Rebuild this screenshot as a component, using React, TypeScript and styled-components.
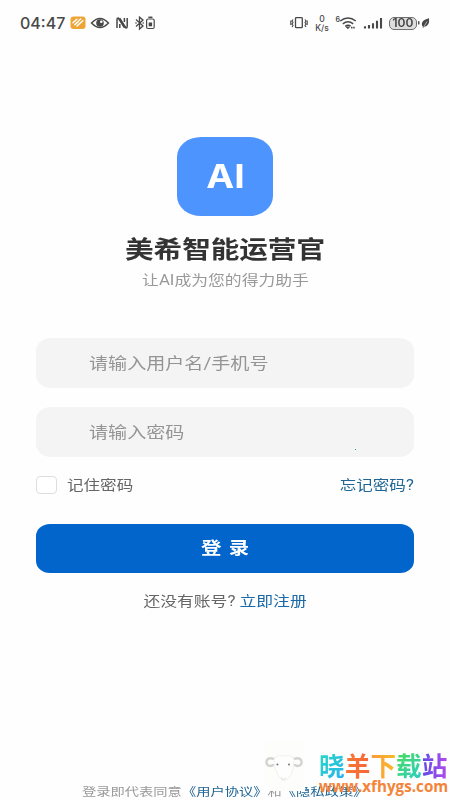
import React from 'react';
import styled, { createGlobalStyle } from 'styled-components';

const GlobalStyle = createGlobalStyle`
  * { box-sizing: border-box; }
  body { margin: 0; background: #fefefe; }
`;

const Page = styled.main`
  position: relative;
  width: 450px;
  height: 800px;
  overflow: hidden;
  display: flex;
  flex-direction: column;
  background: #fefefe;
  font-family: Roboto, 'Noto Sans CJK SC', sans-serif;
`;

const Wide = styled.span<{ $origin?: string; $scale?: number }>`
  display: inline-block;
  white-space: pre;
  transform: scaleX(${(p) => p.$scale ?? 1.2});
  transform-origin: ${(p) => p.$origin ?? 'center'} center;
`;

const StatusBar = styled.header`
  height: 46px;
  padding: 0 20px;
  display: flex;
  align-items: center;
  justify-content: space-between;
  color: #484848;
  svg { display: block; flex: none; }
`;

const StatusGroup = styled.div`
  display: flex;
  align-items: center;
`;

const Clock = styled.time`
  width: 50px;
  font: 500 16px/20px Inter, sans-serif;
  letter-spacing: 0;
`;

const Speed = styled.div`
  width: 16px;
  margin: 1px 5px 0 6px;
  display: flex;
  flex-direction: column;
  align-items: center;
  font: 500 8.5px/9px Inter, sans-serif;
`;

const Battery = styled.div`
  width: 28px;
  height: 13px;
  margin-left: 4px;
  display: flex;
  align-items: center;
  justify-content: center;
  border: 1.5px solid #707070;
  border-radius: 5px;
  background: #dedede;
  color: #484848;
  font: 600 11.5px/11px Inter, sans-serif;
`;

const Brand = styled.section`
  display: flex;
  flex-direction: column;
  align-items: center;
  padding-top: 91px;
`;

const Logo = styled.div`
  width: 96px;
  height: 79px;
  display: flex;
  align-items: center;
  justify-content: center;
  border-radius: 24px / 20px;
  background: #4d94ff;
  color: #fff;
  font: 700 32px/79px Inter, sans-serif;
`;

const Title = styled.h1`
  margin: 18px 0 0;
  font-size: 24px;
  line-height: 32px;
  font-weight: 700;
  color: #333;
`;

const Subtitle = styled.p`
  margin: 4px 0 0;
  font-size: 14px;
  line-height: 20px;
  color: #999;
`;

const Form = styled.form`
  margin: 48px 36px 0;
  display: flex;
  flex-direction: column;
`;

const Field = styled.div`
  height: 50px;
  margin-bottom: 19px;
  padding-left: 53px;
  border-radius: 15px / 13px;
  background: #f4f4f4;
  color: #949494;
  font-size: 15.9px;
  line-height: 51px;
`;

const Options = styled.div`
  height: 20px;
  margin-top: -1px;
  display: flex;
  align-items: center;
  font-size: 13.8px;
  line-height: 20px;
`;

const Checkbox = styled.span`
  width: 21px;
  height: 18px;
  margin-right: 10px;
  border: 1px solid #dedede;
  border-radius: 4px;
  background: #fff;
`;

const Muted = styled.span`
  color: #666;
`;

const Link = styled.a<{ $push?: boolean }>`
  color: #1f6595;
  margin-left: ${(p) => (p.$push ? 'auto' : 0)};
`;

const Submit = styled.button`
  height: 49px;
  margin: 29px 0 0;
  padding: 0;
  border: 0;
  border-radius: 14px / 12px;
  background: #0265cc;
  color: #fff;
  font: 700 17px/47px Roboto, 'Noto Sans CJK SC', sans-serif;
  word-spacing: 2px;
`;

const Register = styled.p`
  margin: 18px 0 0;
  text-align: center;
  font-size: 14px;
  line-height: 20px;
  color: #666;
  a { color: #1a69a8; }
`;

const Terms = styled.footer`
  margin: auto 0 -2px 82px;
  font-size: 11.9px;
  line-height: 20px;
  color: #999;
`;

const Watermark = styled.aside`
  position: absolute;
  left: 265px;
  top: 740px;
  width: 185px;
  height: 60px;
  display: flex;
  gap: 14px;
`;

const Mascot = styled.div`
  width: 40px;
  height: 51px;
  background: #fdfdfb;
`;

const SiteMark = styled.div`
  width: 130px;
  padding-top: 11px;
`;

const SiteName = styled.div`
  display: flex;
  width: 130px;
  font-size: 25.7px;
  line-height: 32px;
  font-weight: 700;
`;

const Glyph = styled.span<{ $paint: string }>`
  background: ${(p) => p.$paint};
  background-clip: text;
  -webkit-background-clip: text;
  color: transparent;
`;

const SiteUrl = styled.div`
  margin-top: -6px;
  font: 700 15.2px/19px 'Open Sans', sans-serif;
  color: #f48439;
`;

const Point = styled.i`
  position: absolute;
  left: 355px;
  top: 449px;
  width: 1px;
  height: 1px;
  background: #19a984;
`;

const siteGlyphs = [
  ['晓', 'linear-gradient(135deg, #25dbc3, #2aaef0)'],
  ['羊', 'linear-gradient(90deg, #f47935, #fa6538)'],
  ['下', 'linear-gradient(90deg, #ff963d, #f4bd27)'],
  ['载', 'linear-gradient(135deg, #4ade57, #28cbcd)'],
  ['站', 'linear-gradient(90deg, #5b4bea, #b24bea)'],
];

const LeftIcons = () => (
  <svg width="87" height="18" viewBox="0 0 87 18" fill="none" stroke="#484848">
    <rect x="0.5" y="2.5" width="15" height="12.5" rx="3" fill="#eda536" stroke="none" />
    <path d="M3 8.8L6.8 5.2M4.8 10.8L8.4 7.4M7 12L12.8 6.8M9.2 6.3L10.7 5" stroke="#fff" strokeWidth="1.5" strokeLinecap="round" />
    <path d="M21.5 9q8.5-9 17 0q-8.5 9-17 0Z" strokeWidth="1.4" />
    <circle cx="30" cy="9" r="3.8" fill="#484848" stroke="none" />
    <circle cx="31.3" cy="7.7" r="1.3" fill="#fff" stroke="none" />
    <path d="M47 14V5.5Q47 4 48.3 4L54.5 13.8M49.8 14V10M57.2 4V12.5Q57.2 14 55.9 14L49.7 4.2M54.4 4V8" strokeWidth="1.5" />
    <path d="M66 5.5l7 6.5-3.5 3V3.2L73 6l-7 6.5" strokeWidth="1.3" />
    <circle cx="66" cy="9" r=".8" fill="#484848" stroke="none" />
    <circle cx="73.2" cy="9" r=".8" fill="#484848" stroke="none" />
    <rect x="76.6" y="5" width="7.6" height="9.5" rx="1.5" strokeWidth="1.2" />
    <path d="M78.4 3.3h4" strokeWidth="1.5" />
    <rect x="78.7" y="8.5" width="3.4" height="3.8" fill="#484848" stroke="none" />
  </svg>
);

const VibrateIcon = () => (
  <svg width="18" height="16" viewBox="0 0 18 16" fill="none" stroke="#484848" strokeWidth="1.3">
    <rect x="5.5" y="2.7" width="6.8" height="10" rx=".8" />
    <path d="M3 4.5L2 6l1 1.5L2 9l1 1.5L2 12M15 4.5l1 1.5-1 1.5 1 1.5-1 1.5 1 1.5M.8 5.5v4.5M17.2 5.5v4.5" strokeWidth="1.1" />
  </svg>
);

const SignalIcons = () => (
  <svg width="50" height="18" viewBox="0 0 50 18" fill="none" stroke="#484848">
    <text x="0.6" y="7.6" fill="#484848" stroke="none" fontSize="7" fontWeight="600" fontFamily="Inter">6</text>
    <path d="M5.2 7q7.8-6 15.6 0M7.8 9.8q5.2-4 10.4 0M10.2 12.4q2.8-2 5.4-.3" strokeWidth="1.5" />
    <path d="M11.2 13l1.7 1.6L14.5 13Z" fill="#484848" />
    <path d="M16 13.7h3.8" strokeWidth="1.7" strokeDasharray="1.5 .7" />
    <path d="M30 14.5v-2.3M34 14.5v-3.6M38 14.5V9.2M42 14.5V6.8M46 14.5V4" strokeWidth="2.1" />
  </svg>
);

const LeafIcon = () => (
  <svg width="13" height="14" viewBox="0 0 13 14">
    <rect x="1" y="5" width="1.5" height="3.6" rx=".7" fill="#555" />
    <path d="M12 2.3Q5 4 4.8 8q0 2.3 1.3 2.7l-.7 1.5 1.7-1.2Q13 10 12 2.3Z" fill="#484848" />
    <path d="M6.8 11L10 5.5" stroke="#ddd" strokeWidth=".7" />
  </svg>
);

const MascotArt = () => (
  <svg width="40" height="51" viewBox="0 0 40 51" fill="none">
    <path d="M9 18q4-4 10-2 6-2 10 2 0 13-5 20-5 5-9 0Q9 31 9 18Z" fill="#fefefe" stroke="#f1f1ee" />
    <path d="M9 19q-5-2-7 1-2 5 3 6 3 0 3-2M29 19q5-2 7 1 2 5-3 6-3 0-3-2" stroke="#d3d3d1" strokeWidth="2.4" />
    <circle cx="12.4" cy="24.5" r="1" fill="#777" />
    <circle cx="24" cy="24.5" r="1" fill="#777" />
    <path d="M16 38l2.5 1.5L21 38" stroke="#ddd" />
  </svg>
);

export default function App() {
  return (
    <>
      <GlobalStyle />
      <Page>
        <StatusBar>
          <StatusGroup><Clock>04:47</Clock><LeftIcons /></StatusGroup>
          <StatusGroup>
            <VibrateIcon />
            <Speed><span>0</span><span>K/s</span></Speed>
            <SignalIcons />
            <Battery><Wide $scale={1.05}>100</Wide></Battery>
            <LeafIcon />
          </StatusGroup>
        </StatusBar>
        <Brand>
          <Logo><Wide $scale={1.17}>AI</Wide></Logo>
          <Title><Wide $scale={1.19}>美希智能运营官</Wide></Title>
          <Subtitle><Wide>让AI成为您的得力助手</Wide></Subtitle>
        </Brand>
        <Form>
          <Field><Wide $origin="left">请输入用户名/手机号</Wide></Field>
          <Field><Wide $origin="left">请输入密码</Wide></Field>
          <Options>
            <Checkbox />
            <Muted><Wide $origin="left">记住密码</Wide></Muted>
            <Link $push><Wide $origin="right">忘记密码?</Wide></Link>
          </Options>
          <Submit type="button"><Wide>登 录</Wide></Submit>
        </Form>
        <Register><Wide>还没有账号? <Link>立即注册</Link></Wide></Register>
        <Terms>
          <Wide $origin="left">登录即代表同意<Link>《用户协议》</Link>和<Link>《隐私政策》</Link></Wide>
        </Terms>
        <Watermark>
          <Mascot><MascotArt /></Mascot>
          <SiteMark>
            <SiteName>{siteGlyphs.map(([c, paint]) => <Glyph key={c} $paint={paint}>{c}</Glyph>)}</SiteName>
            <SiteUrl>www.xfhygs.com</SiteUrl>
          </SiteMark>
        </Watermark>
        <Point />
      </Page>
    </>
  );
}
